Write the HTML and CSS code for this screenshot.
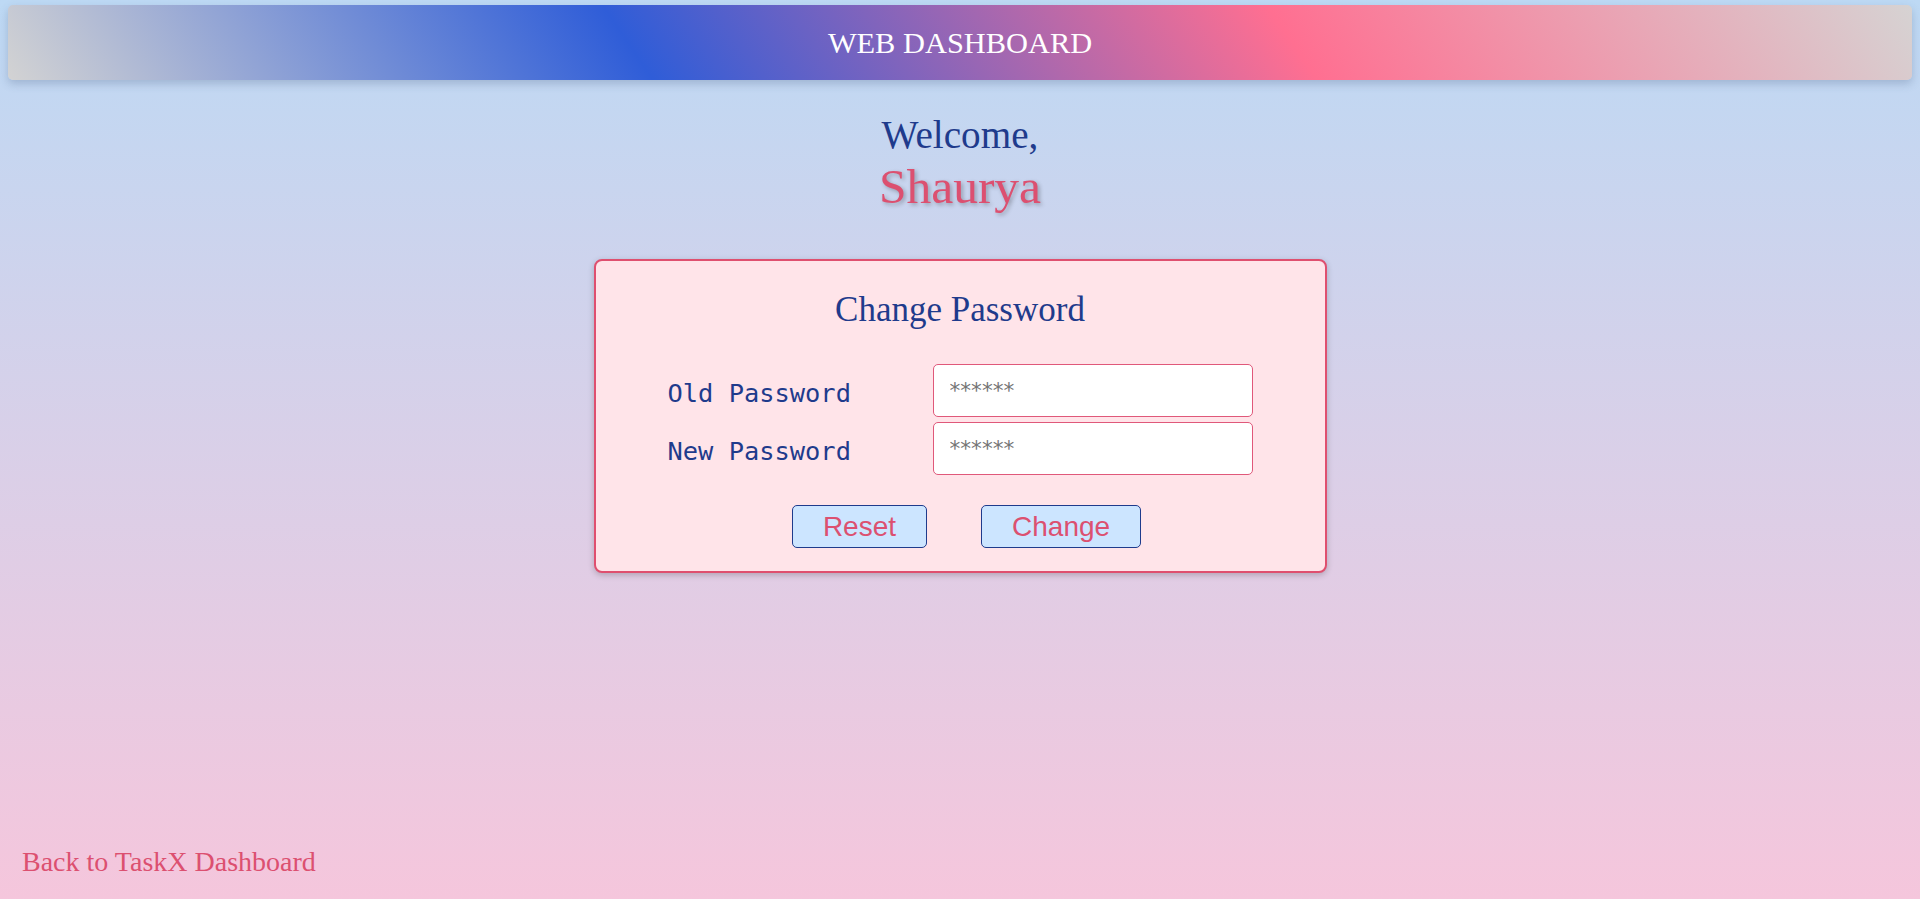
FILE: index.html
```html
<!DOCTYPE html>
<html lang="en">
<head>
<meta charset="utf-8">
<title>Web Dashboard</title>
<link rel="stylesheet" href="styles.css">
</head>
<body>
<div class="page">
  <header class="topbar">WEB DASHBOARD</header>
  <section class="welcome">
    <div class="welcome-line">Welcome,</div>
    <div class="welcome-name">Shaurya</div>
  </section>
  <form class="card">
    <h2 class="card-title">Change Password</h2>
    <div class="fields">
      <label class="field-label" for="old">Old Password</label>
      <input class="field-input" id="old" type="password" placeholder="******">
      <label class="field-label" for="new">New Password</label>
      <input class="field-input" id="new" type="password" placeholder="******">
    </div>
    <div class="actions">
      <button type="reset" class="btn">Reset</button>
      <button type="button" class="btn">Change</button>
    </div>
  </form>
  <footer class="footer">
    <a class="back-link" href="#">Back to TaskX Dashboard</a>
  </footer>
</div>
</body>
</html>
```
FILE: styles.css
```css
html, body {
  margin: 0;
  padding: 0;
}
body {
  min-height: 100vh;
  background: linear-gradient(to bottom, #bdd9f4 0%, #f5c6dc 100%);
  font-family: "Liberation Serif", "Times New Roman", serif;
}
.page {
  min-height: 100vh;
  box-sizing: border-box;
  display: flex;
  flex-direction: column;
  padding: 5px 8px 17px 8px;
}
.topbar {
  height: 75px;
  line-height: 76px;
  text-align: center;
  color: #ffffff;
  font-size: 30.4px;
  border-radius: 5px;
  background: linear-gradient(56deg, #d3d3d3 0%, #2f5dd8 33%, #ff6f91 67%, #d6d3d3 100%);
  box-shadow: 0 4px 8px rgba(60, 80, 120, 0.25);
}
.welcome {
  margin-top: 33px;
  text-align: center;
}
.welcome-line {
  font-size: 39.2px;
  line-height: 44px;
  color: #1f3b8c;
}
.welcome-name {
  font-size: 49.5px;
  line-height: 60px;
  color: #dc5070;
  text-shadow: 2px 2px 4px rgba(0, 0, 0, 0.28);
}
.card {
  margin: 42px auto 0 auto;
  width: 733px;
  box-sizing: border-box;
  padding: 29px 72px 23px 72px;
  background: #ffe4e9;
  border: 2px solid #df4f6f;
  border-radius: 8px;
  box-shadow: 0 2px 6px rgba(0, 0, 0, 0.22);
}
.card-title {
  margin: 0;
  font-weight: normal;
  font-size: 35px;
  line-height: 40px;
  text-align: center;
  color: #1f3b8c;
}
.fields {
  margin-top: 34px;
  display: grid;
  grid-template-columns: 185px 320px;
  column-gap: 80px;
  row-gap: 5px;
  align-items: center;
}
.field-label {
  font-family: "DejaVu Sans Mono", monospace;
  font-size: 25.4px;
  color: #1f3b8c;
  white-space: nowrap;
  padding-top: 4px;
}
.field-input {
  box-sizing: border-box;
  width: 320px;
  height: 53px;
  padding: 0 16px;
  border: 1px solid #e0587a;
  border-radius: 5px;
  background: #ffffff;
  font-family: "DejaVu Sans", sans-serif;
  font-size: 21.6px;
  color: #333;
  outline: none;
}
.field-input::placeholder {
  color: #757575;
}
.actions {
  margin-top: 30px;
  display: flex;
  justify-content: center;
  gap: 54px;
  padding-left: 13px;
}
.btn {
  font-family: "Liberation Sans", Arial, sans-serif;
  font-size: 28px;
  line-height: 33px;
  padding: 4px 30px;
  color: #dc5070;
  background: #cce5ff;
  border: 1px solid #1f3b8c;
  border-radius: 5px;
  cursor: pointer;
}
.footer {
  margin-top: auto;
  padding-left: 14px;
  line-height: 32px;
}
.back-link {
  font-size: 28px;
  color: #dc5070;
  text-decoration: none;
}
```
